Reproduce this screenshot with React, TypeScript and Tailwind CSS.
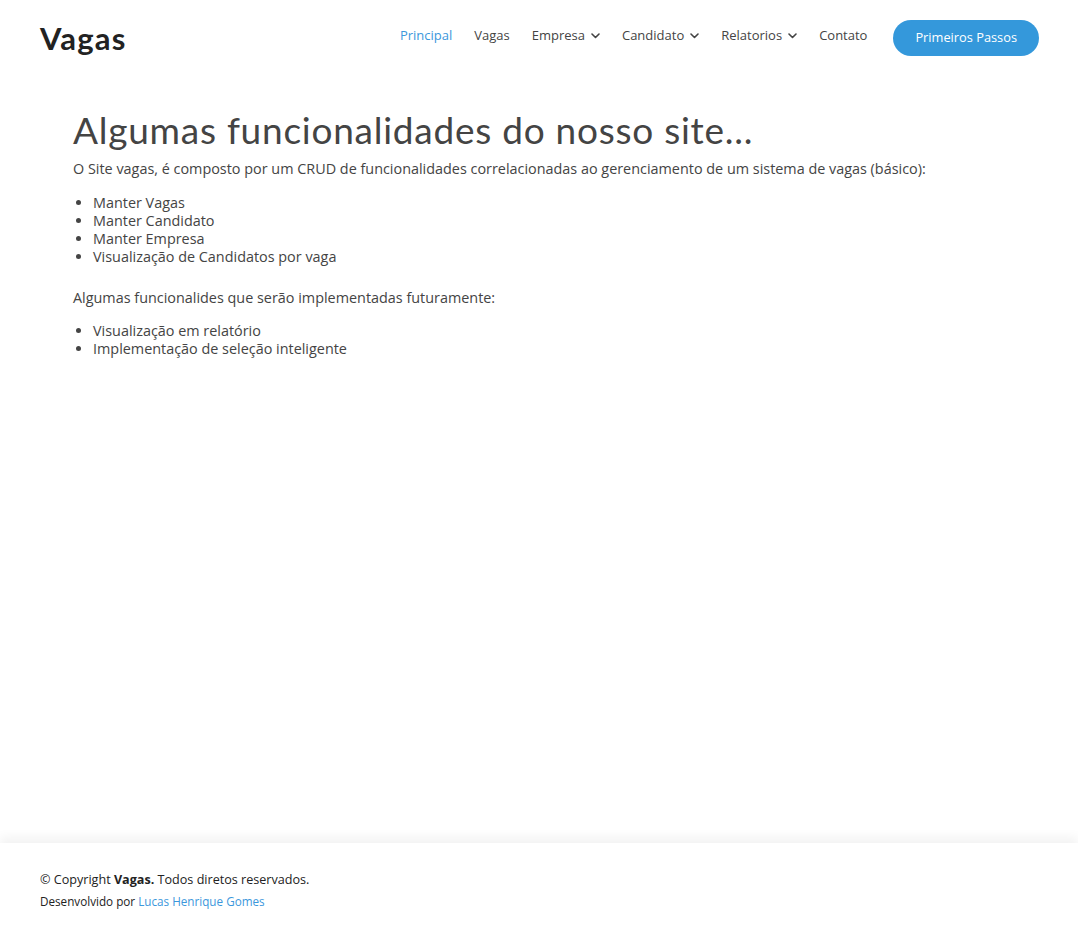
const links = [
    { label: 'Principal', active: true },
    { label: 'Vagas' },
    { label: 'Empresa', drop: true },
    { label: 'Candidato', drop: true },
    { label: 'Relatorios', drop: true },
    { label: 'Contato' },
];

function Chevron() {
    return (
        <svg width="9" height="6" viewBox="0 0 9 6" fill="none" stroke="currentColor" strokeWidth="1.6" strokeLinecap="round" strokeLinejoin="round">
            <path d="M1 1l3.5 3.5L8 1" />
        </svg>
    );
}

export default function App() {
    return (
        <div className="flex flex-col min-h-screen bg-white text-[#444] font-['Open_Sans',sans-serif]">
            <header className="flex items-center justify-between pl-10 pr-[39px] h-[76px]">
                <a className="text-[31px] font-bold text-[#222] tracking-[1.2px] font-['Lato',sans-serif] leading-none">Vagas</a>
                <nav className="flex items-center">
                    <ul className="flex items-center gap-[22px] text-[13px] mr-[26px] -mt-[5px]">
                        {links.map((l) => (
                            <li key={l.label} className={`flex items-center gap-[6px] ${l.active ? 'text-[#3c97dc]' : 'text-[#444]'}`}>
                                {l.label}
                                {l.drop && <Chevron />}
                            </li>
                        ))}
                    </ul>
                    <button className="h-9 px-[22px] rounded-full bg-[#3498db] text-white text-[12.8px]">Primeiros Passos</button>
                </nav>
            </header>

            <main className="flex-grow px-[73px] pt-[32px]">
                <h1 className="text-[37px] tracking-[0.75px] text-[#444] font-['Lato',sans-serif] leading-[44px] mb-[7px]">Algumas funcionalidades do nosso site...</h1>
                <p className="text-[14.4px] leading-[20px]">
                    O Site vagas, é composto por um CRUD de funcionalidades correlacionadas ao gerenciamento de um sistema de vagas (básico):
                </p>
                <ul className="list-disc pl-5 mt-[15px] text-[14.4px] leading-[18px]">
                    <li>Manter Vagas</li>
                    <li>Manter Candidato</li>
                    <li>Manter Empresa</li>
                    <li>Visualização de Candidatos por vaga</li>
                </ul>
                <p className="text-[14.4px] leading-[20px] mt-[22px]">Algumas funcionalides que serão implementadas futuramente:</p>
                <ul className="list-disc pl-5 mt-[14px] text-[14.4px] leading-[18px]">
                    <li>Visualização em relatório</li>
                    <li>Implementação de seleção inteligente</li>
                </ul>
            </main>

            <footer className="h-[89px] px-10 pt-[28px] shadow-[0_-6px_10px_rgba(0,0,0,0.05)] text-[#222]">
                <p className="text-[12.6px] leading-[18px]">
                    © Copyright <strong className="font-bold">Vagas.</strong> Todos diretos reservados.
                </p>
                <p className="text-[11.7px] leading-[18px] mt-[3px]">
                    Desenvolvido por <a className="text-[#3c97dc]">Lucas Henrique Gomes</a>
                </p>
            </footer>
        </div>
    );
}
